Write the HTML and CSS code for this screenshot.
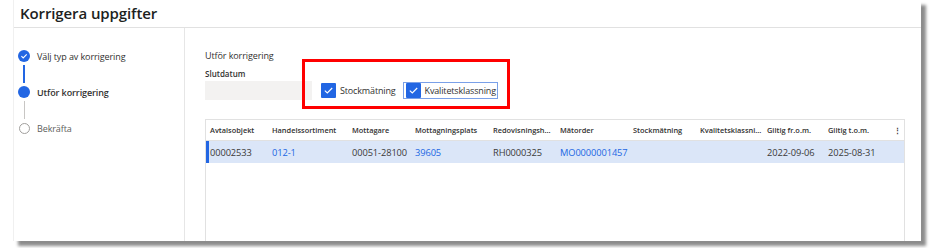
FILE: index.html
```html
<!DOCTYPE html>
<html lang="sv">
<head>
<meta charset="utf-8">
<title>Korrigera uppgifter</title>
<link rel="stylesheet" href="styles.css">
</head>
<body>
<div class="panel">
  <header class="panel-header">
    <h1 class="title">Korrigera uppgifter</h1>
  </header>
  <div class="panel-body">
    <nav class="steps">
      <div class="step done">
        <span class="marker">
          <svg width="12" height="12" viewBox="0 0 12 12"><circle cx="6" cy="6" r="6" fill="#2266e3"/><path d="M3.4 6.1 L5.2 7.9 L8.7 4.3" fill="none" stroke="#fff" stroke-width="1.1"/></svg>
        </span>
        <span class="label">Välj typ av korrigering</span>
      </div>
      <div class="connector blue"></div>
      <div class="step current">
        <span class="marker"><span class="dot"></span></span>
        <span class="label">Utför korrigering</span>
      </div>
      <div class="connector gray"></div>
      <div class="step todo">
        <span class="marker"><span class="ring"></span></span>
        <span class="label">Bekräfta</span>
      </div>
    </nav>
    <main class="content">
      <div class="section-title">Utför korrigering</div>
      <div class="fields">
        <div class="field">
          <label class="field-label">Slutdatum</label>
          <div class="input"></div>
        </div>
        <div class="check-group">
          <div class="check">
            <span class="box"><svg width="15" height="15" viewBox="0 0 15 15"><path d="M3.8 7.6 L6.3 10 L11.2 5" fill="none" stroke="#fff" stroke-width="1.1"/></svg></span>
            <span class="check-label">Stockmätning</span>
          </div>
          <div class="check focused">
            <span class="box"><svg width="15" height="15" viewBox="0 0 15 15"><path d="M3.8 7.6 L6.3 10 L11.2 5" fill="none" stroke="#fff" stroke-width="1.1"/></svg></span>
            <span class="check-label">Kvalitetsklassning</span>
          </div>
          <div class="highlight"></div>
        </div>
      </div>
      <div class="grid">
        <div class="grid-row head">
          <div class="cell">Avtalsobjekt</div>
          <div class="cell">Handelssortiment</div>
          <div class="cell">Mottagare</div>
          <div class="cell">Mottagningsplats</div>
          <div class="cell">Redovisningsh...</div>
          <div class="cell">Mätorder</div>
          <div class="cell">Stockmätning</div>
          <div class="cell">Kvalitetsklassni...</div>
          <div class="cell">Giltig fr.o.m.</div>
          <div class="cell">Giltig t.o.m.</div>
          <div class="cell more">⋮</div>
        </div>
        <div class="grid-row data selected">
          <div class="cell">00002533</div>
          <div class="cell link">012-1</div>
          <div class="cell">00051-28100</div>
          <div class="cell link">39605</div>
          <div class="cell">RH0000325</div>
          <div class="cell link">MO0000001457</div>
          <div class="cell"></div>
          <div class="cell"></div>
          <div class="cell">2022-09-06</div>
          <div class="cell">2025-08-31</div>
          <div class="cell"></div>
        </div>
      </div>
    </main>
  </div>
</div>
</body>
</html>
```

FILE: styles.css
```css
* { box-sizing: border-box; }
html, body { margin: 0; padding: 0; background: #fff; }
body {
  width: 932px;
  height: 248px;
  overflow: hidden;
  font-family: "Open Sans", "Noto Sans", sans-serif;
  color: #323130;
}
.panel {
  margin-left: 13px;
  width: 908px;
  height: 241px;
  background: #fff;
  border-left: 1px solid #f0f0f0;
  box-shadow: 5px 5px 3px rgba(0,0,0,0.45);
  display: flex;
  flex-direction: column;
}
.panel-header {
  height: 28px;
  border-bottom: 1px solid #e1e1e1;
  padding-left: 6px;
  flex: none;
}
.title {
  margin: 0;
  font-size: 15px;
  font-weight: 600;
  line-height: 26px;
  color: #201f1e;
  letter-spacing: -0.1px;
}
.panel-body {
  flex: 1;
  display: flex;
  min-height: 0;
}
.steps {
  width: 171px;
  flex: none;
  border-right: 1px solid #e6e6e6;
  padding: 22px 0 0 4px;
  display: flex;
  flex-direction: column;
}
.step {
  display: flex;
  align-items: center;
  height: 12px;
  gap: 7px;
}
.marker {
  width: 12px;
  height: 12px;
  display: flex;
  align-items: center;
  justify-content: center;
  flex: none;
}
.marker svg { display: block; }
.dot {
  width: 12px; height: 12px; border-radius: 50%;
  background: #2266e3;
}
.ring {
  width: 11px; height: 11px; border-radius: 50%;
  border: 1px solid #a19f9d;
}
.label {
  font-size: 9px;
  color: #323130;
  white-space: nowrap;
  letter-spacing: -0.1px;
}
.current .label { font-weight: 600; }
.todo .label { color: #605e5c; }
.connector {
  width: 2px;
  height: 18px;
  margin: 3px 0 3px 5px;
}
.connector.blue { background: #2266e3; }
.connector.gray { background: #c8c6c4; width: 1px; margin-left: 5.5px; }

.content {
  flex: 1;
  padding: 21px 16px 0 20px;
  display: flex;
  flex-direction: column;
  min-width: 0;
}
.section-title {
  font-size: 9px;
  line-height: 14px;
  color: #323130;
  letter-spacing: -0.1px;
}
.fields {
  display: flex;
  align-items: flex-end;
  margin-top: 5px;
  gap: 8px;
}
.field { display: flex; flex-direction: column; }
.field-label {
  font-size: 8px;
  font-weight: 600;
  line-height: 12px;
  color: #323130;
  margin-bottom: 1px;
}
.input {
  width: 107px;
  height: 19px;
  background: #f3f2f1;
}
.check-group {
  position: relative;
  display: flex;
  align-items: center;
  height: 19px;
}
.check {
  display: flex;
  align-items: center;
  height: 17px;
  gap: 4px;
  padding: 0 1px 0 0;
  border: 1px solid transparent;
}
.check + .check { margin-left: 5px; padding-left: 2px; }
.check.focused { border-color: #7aa0e8; }
.box {
  width: 15px;
  height: 15px;
  background: #2266e3;
  border-radius: 1px;
  flex: none;
}
.box svg { display: block; }
.check-label {
  font-size: 9px;
  color: #323130;
  white-space: nowrap;
  letter-spacing: -0.15px;
}
.highlight {
  position: absolute;
  left: -18px;
  top: -22px;
  width: 208px;
  height: 50px;
  border: 3px solid #ff0000;
  pointer-events: none;
}

.grid {
  margin-top: 19px;
  flex: 1;
  border: 1px solid #e1e1e1;
  border-bottom: none;
  min-height: 0;
}
.grid-row {
  display: grid;
  grid-template-columns: 62px 80px 63px 78px 67px 73px 67px 67px 61px 70px 9px;
  align-items: center;
}
.grid-row.head {
  height: 21px;
  border-bottom: 1px solid #e1e1e1;
}
.grid-row.head .cell {
  font-size: 7.4px;
  font-weight: 600;
  color: #323130;
  letter-spacing: 0;
}
.grid-row.data {
  height: 22px;
}
.grid-row.selected {
  background: #dbe6f8;
  box-shadow: inset 3px 0 0 #2266e3;
}
.cell {
  padding-left: 4px;
  white-space: nowrap;
  overflow: hidden;
  font-size: 9.3px;
  color: #3b3a39;
  letter-spacing: -0.1px;
}
.cell.link { color: #2266e3; }
.cell.more { padding-left: 0; color: #a19f9d; font-size: 10px; }
```
